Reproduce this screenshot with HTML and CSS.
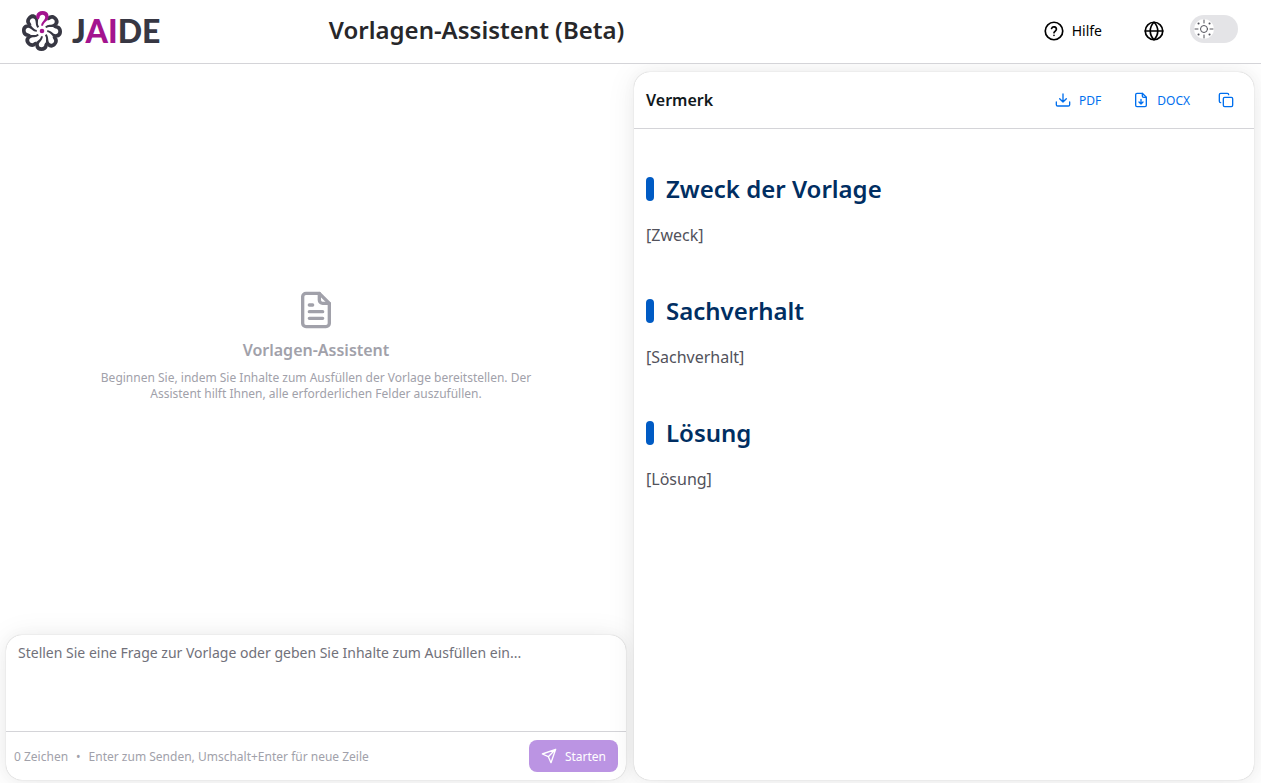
FILE: index.html
```html
<!DOCTYPE html>
<html lang="de">
	<head>
		<meta charset="utf-8">
		<meta name="viewport" content="width=device-width,initial-scale=1">
		<link rel="stylesheet" href="styles.css">
		<title>Vorlagen-Assistent (Beta)</title>
	</head>
	<body>
		<header class="header">
			<a class="logo" href="#" aria-label="JAIDE">
				<svg class="flower" viewBox="-20 -20 40 40" fill="#373743">
					<defs>
						<path id="petal" d="M-3.4-11.4C-7.400-12-6.600-20 .6-20C7-20 8-14 5-10.600C3-8.600 1.400-8 1-5.200L-.8-5.200C-1-9 3.200-11 3.200-13.800C3.200-17.200-2.400-17.200-2.400-13.600Z"/>
					</defs>
					<use href="#petal" transform="rotate(45)"/>
					<use href="#petal" transform="rotate(90)"/>
					<use href="#petal" transform="rotate(135)"/>
					<use href="#petal" transform="rotate(180)"/>
					<use href="#petal" transform="rotate(225)"/>
					<use href="#petal" transform="rotate(270)"/>
					<use href="#petal" transform="rotate(315)"/>
					<use href="#petal" fill="#a3148f"/>
					<circle r="2.300" fill="#a3148f"/>
				</svg>
				<span class="logo-text">J<b>AI</b>DE</span>
			</a>
			<h1 class="title">Vorlagen-Assistent (Beta)</h1>
			<nav class="tools">
				<button class="help" type="button">
					<svg class="icon20" viewBox="0 0 24 24"><circle cx="12" cy="12" r="10.5"/><path d="M9.1 9a3 3 0 0 1 5.8 1c0 2-2.9 2.6-2.9 4M12 17.3v.1"/></svg>
					Hilfe
				</button>
				<button class="lang" type="button" aria-label="Sprache">
					<svg class="icon20" viewBox="0 0 24 24"><circle cx="12" cy="12" r="10.5"/><path d="M1.5 12h21M12 1.5c-6 6-6 15 0 21c6-6 6-15 0-21z"/></svg>
				</button>
				<label class="switch">
					<input type="checkbox" aria-label="Dunkles Design">
					<span class="thumb">
						<svg viewBox="0 0 20 20"><circle cx="10" cy="10" r="3.5"/><path d="M10 1v3M10 16v3M1 10h3M16 10h3"/><path class="dots" d="M4.5 4.5h.1M15.5 4.5h.1M4.5 15.5h.1M15.5 15.5h.1"/></svg>
					</span>
				</label>
			</nav>
		</header>
		<main class="main">
			<section class="chat">
				<div class="empty">
					<svg class="icon40" viewBox="0 0 24 24"><path d="M14 2H6a2 2 0 0 0-2 2v16a2 2 0 0 0 2 2h12a2 2 0 0 0 2-2V8z"/><path d="M14 2v4a2 2 0 0 0 2 2h4M10 9H8M16 13H8M16 17H8"/></svg>
					<h2>Vorlagen-Assistent</h2>
					<p>Beginnen Sie, indem Sie Inhalte zum Ausfüllen der Vorlage bereitstellen. Der Assistent hilft Ihnen, alle erforderlichen Felder auszufüllen.</p>
				</div>
				<form class="card">
					<textarea class="question" aria-label="Nachricht" placeholder="Stellen Sie eine Frage zur Vorlage oder geben Sie Inhalte zum Ausfüllen ein..."></textarea>
					<div class="card-footer">
						<div class="hint">
							<span>0 Zeichen</span>
							<span>•</span>
							<span>Enter zum Senden, Umschalt+Enter für neue Zeile</span>
						</div>
						<button class="start" type="button">
							<svg class="icon16" viewBox="0 0 24 24"><path d="M22 2L15 22l-4-9L2 9zM22 2L11 13"/></svg>
							Starten
						</button>
					</div>
				</form>
			</section>
			<section class="card document">
				<div class="card-header">
					<h2>Vermerk</h2>
					<div class="actions">
						<button type="button">
							<svg class="icon16" viewBox="0 0 24 24"><path d="M12 3v12M7 10l5 5l5-5M2 15v4a2 2 0 0 0 2 2h16a2 2 0 0 0 2-2v-4"/></svg>
							PDF
						</button>
						<button type="button">
							<svg class="icon16" viewBox="0 0 24 24"><path d="M14 2H6a2 2 0 0 0-2 2v16a2 2 0 0 0 2 2h12a2 2 0 0 0 2-2V8z"/><path d="M14 2v4a2 2 0 0 0 2 2h4M12 11v7M9 15l3 3l3-3"/></svg>
							DOCX
						</button>
						<button class="copy" type="button" aria-label="Kopieren">
							<svg class="icon16" viewBox="0 0 24 24"><rect x="8" y="8" width="14" height="14" rx="2"/><path d="M4 16a2 2 0 0 1-2-2V4a2 2 0 0 1 2-2h10a2 2 0 0 1 2 2"/></svg>
						</button>
					</div>
				</div>
				<div class="text">
					<h3>Zweck der Vorlage</h3>
					<p>[Zweck]</p>
					<h3>Sachverhalt</h3>
					<p>[Sachverhalt]</p>
					<h3>Lösung</h3>
					<p>[Lösung]</p>
				</div>
			</section>
		</main>
	</body>
</html>
```

FILE: styles.css
```css
*{
	margin: 0;
	padding: 0;
	box-sizing: border-box;
}
body{
	height: 100vh;
	display: flex;
	flex-direction: column;
	font-family: "Noto Sans", "Open Sans", sans-serif;
	font-size: 14px;
	color: #11181c;
	background: #fff;
}
button,textarea{
	font: inherit;
	border: none;
	background: none;
}
button{
	display: flex;
	align-items: center;
	gap: 8px;
	cursor: pointer;
}
svg{
	flex: none;
}
.icon16,.icon20,.icon40,.thumb svg{
	fill: none;
	stroke: currentColor;
	stroke-width: 2;
	stroke-linecap: round;
	stroke-linejoin: round;
}
.icon16{
	width: 16px;
	height: 16px;
}
.icon20{
	width: 20px;
	height: 20px;
}
.icon40{
	width: 40px;
	height: 40px;
}

/* header */
.header{
	flex: none;
	height: 64px;
	padding: 0 23px 2px 22px;
	display: grid;
	grid-template-columns: 1fr auto 2fr;
	align-items: center;
	border-bottom: 1px solid #d4d4d8;
}
.logo{
	display: flex;
	align-items: center;
	gap: 10px;
	color: #373743;
	text-decoration: none;
}
.flower{
	width: 40px;
	height: 40px;
}
.logo-text{
	font-family: Lato, sans-serif;
	font-size: 32px;
	font-weight: 900;
	line-height: 40px;
}
.logo-text b{
	color: #a3148f;
	font-weight: 900;
}
.title{
	font-size: 24px;
	font-weight: 600;
	line-height: 32px;
	padding-bottom: 2px;
	color: #27272a;
}
.tools{
	display: flex;
	align-items: center;
	justify-content: flex-end;
}
.tools button{
	color: #000;
}
.lang{
	margin: 0 26px 0 42px;
}
.switch{
	width: 48px;
	height: 28px;
	padding: 4px;
	margin-bottom: 4px;
	border-radius: 14px;
	background: #e4e4e7;
}
.switch input{
	appearance: none;
	display: block;
}
.thumb{
	display: block;
	width: 20px;
	height: 20px;
	border-radius: 50%;
	background: #fff;
	color: #52525b;
}
.thumb svg{
	display: block;
	stroke-width: 1;
}
.thumb .dots{
	stroke-width: 2;
}

/* columns */
.main{
	flex: 1;
	min-height: 0;
	overflow: hidden;
	padding: 8px 7px 3px 6px;
	display: grid;
	grid-template-columns: 1fr 1fr;
	gap: 8px;
}
.chat{
	display: flex;
	flex-direction: column;
}
.card{
	display: flex;
	flex-direction: column;
	border-radius: 16px;
	background: #fff;
	box-shadow: 0 0 15px rgba(0,0,0,0.03), 0 2px 30px rgba(0,0,0,0.08), 0 0 1px rgba(0,0,0,0.3);
}
.empty{
	flex: 1;
	display: flex;
	flex-direction: column;
	align-items: center;
	justify-content: center;
	gap: 8px;
	padding-bottom: 16px;
	text-align: center;
	color: #a1a1aa;
}
.empty h2{
	font-size: 16px;
	font-weight: 600;
	line-height: 24px;
}
.empty p{
	max-width: 448px;
	font-size: 12px;
	line-height: 16px;
}
.question{
	height: 96px;
	padding: 8px 12px;
	line-height: 20px;
	resize: none;
	outline: none;
}
.question::placeholder{
	color: #71717a;
}
.card-footer{
	display: flex;
	align-items: center;
	justify-content: space-between;
	padding: 8px;
	border-top: 1px solid #d4d4d8;
}
.hint{
	display: flex;
	gap: 8px;
	font-size: 12px;
	color: #a1a1aa;
}
.start{
	height: 32px;
	padding: 0 12px;
	border-radius: 8px;
	font-size: 12px;
	color: #fff;
	background: #bb94e3;
}

/* document */
.card-header{
	height: 57px;
	padding: 0 20px 0 12px;
	display: flex;
	align-items: center;
	justify-content: space-between;
	border-bottom: 1px solid #d4d4d8;
}
.card-header h2{
	font-size: 16px;
	font-weight: 600;
}
.actions{
	display: flex;
	gap: 32px;
}
.actions button{
	font-size: 12px;
	color: #006fee;
}
.actions .copy{
	margin-left: -4px;
}
.text{
	padding: 44px 12px 0;
}
.text h3{
	display: flex;
	align-items: center;
	gap: 12px;
	margin-bottom: 16px;
	font-size: 24px;
	font-weight: 600;
	line-height: 32px;
	color: #002e62;
}
.text h3::before{
	content: "";
	width: 8px;
	height: 24px;
	border-radius: 4px;
	background: #005bc4;
}
.text p{
	margin-bottom: 46px;
	font-size: 16px;
	line-height: 28px;
	color: #52525b;
}
```
